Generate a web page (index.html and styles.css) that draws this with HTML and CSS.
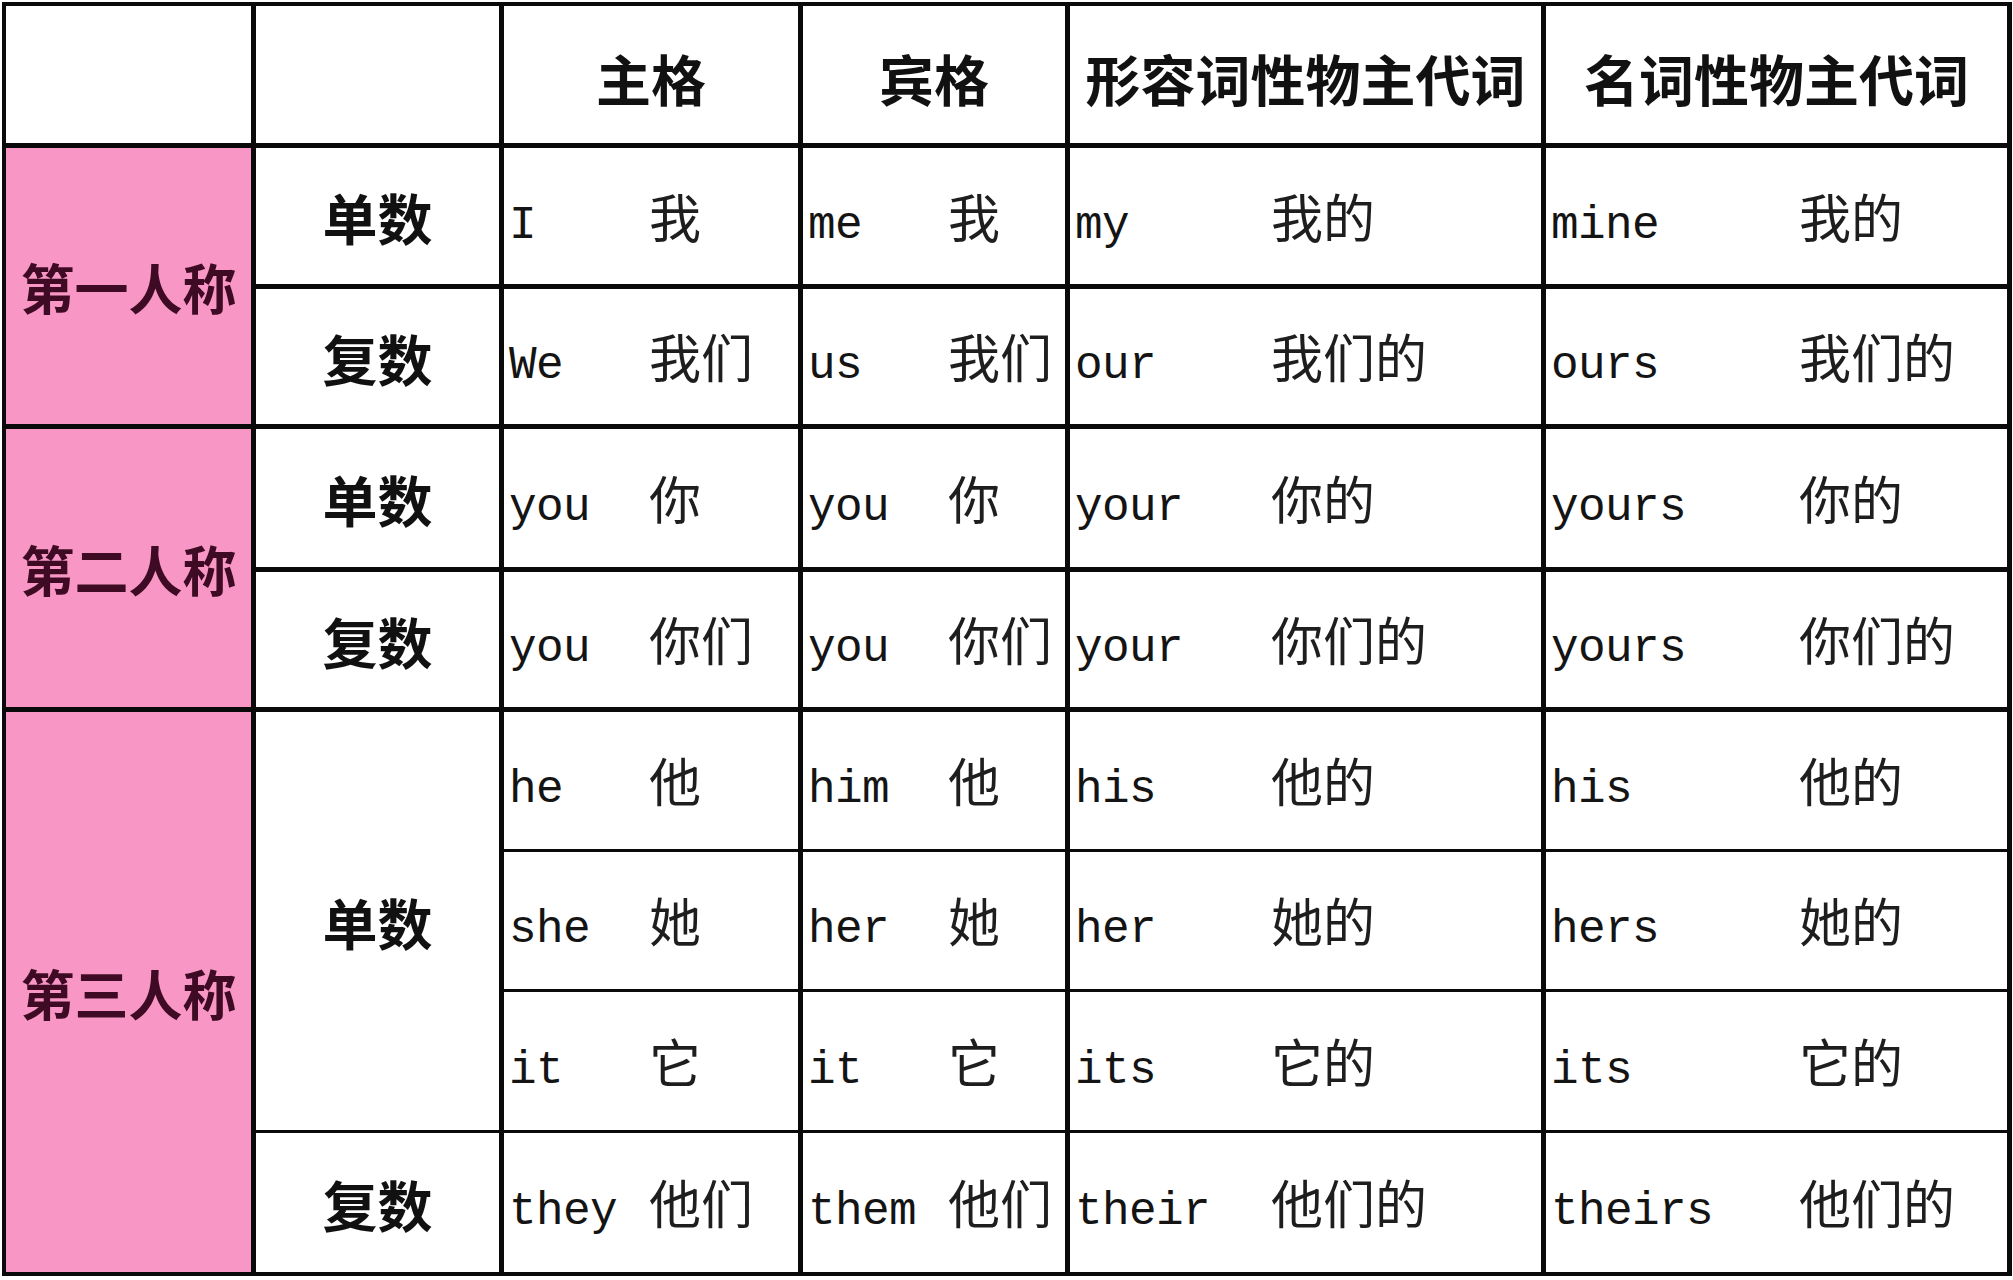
FILE: index.html
```html
<!DOCTYPE html>
<html lang="zh-CN">
<head>
<meta charset="utf-8">
<title>人称代词表</title>
<link rel="stylesheet" href="styles.css">
</head>
<body>
<div class="table">
  <div class="cell head"></div>
  <div class="cell head"></div>
  <div class="cell head">主格</div>
  <div class="cell head">宾格</div>
  <div class="cell head">形容词性物主代词</div>
  <div class="cell head">名词性物主代词</div>

  <div class="cell person span2">第一人称</div>
  <div class="cell label">单数</div>
  <div class="cell d c3"><div class="line"><span class="en">I</span><span class="zh">我</span></div></div>
  <div class="cell d c4"><div class="line"><span class="en">me</span><span class="zh">我</span></div></div>
  <div class="cell d c5"><div class="line"><span class="en">my</span><span class="zh">我的</span></div></div>
  <div class="cell d c6"><div class="line"><span class="en">mine</span><span class="zh">我的</span></div></div>

  <div class="cell label">复数</div>
  <div class="cell d c3"><div class="line"><span class="en">We</span><span class="zh">我们</span></div></div>
  <div class="cell d c4"><div class="line"><span class="en">us</span><span class="zh">我们</span></div></div>
  <div class="cell d c5"><div class="line"><span class="en">our</span><span class="zh">我们的</span></div></div>
  <div class="cell d c6"><div class="line"><span class="en">ours</span><span class="zh">我们的</span></div></div>

  <div class="cell person span2">第二人称</div>
  <div class="cell label">单数</div>
  <div class="cell d c3"><div class="line"><span class="en">you</span><span class="zh">你</span></div></div>
  <div class="cell d c4"><div class="line"><span class="en">you</span><span class="zh">你</span></div></div>
  <div class="cell d c5"><div class="line"><span class="en">your</span><span class="zh">你的</span></div></div>
  <div class="cell d c6"><div class="line"><span class="en">yours</span><span class="zh">你的</span></div></div>

  <div class="cell label">复数</div>
  <div class="cell d c3"><div class="line"><span class="en">you</span><span class="zh">你们</span></div></div>
  <div class="cell d c4"><div class="line"><span class="en">you</span><span class="zh">你们</span></div></div>
  <div class="cell d c5"><div class="line"><span class="en">your</span><span class="zh">你们的</span></div></div>
  <div class="cell d c6"><div class="line"><span class="en">yours</span><span class="zh">你们的</span></div></div>

  <div class="cell person span4 last">第三人称</div>
  <div class="cell label span3 thin">单数</div>
  <div class="cell d c3 thin"><div class="line"><span class="en">he</span><span class="zh">他</span></div></div>
  <div class="cell d c4 thin"><div class="line"><span class="en">him</span><span class="zh">他</span></div></div>
  <div class="cell d c5 thin"><div class="line"><span class="en">his</span><span class="zh">他的</span></div></div>
  <div class="cell d c6 thin"><div class="line"><span class="en">his</span><span class="zh">他的</span></div></div>

  <div class="cell d c3 thin"><div class="line"><span class="en">she</span><span class="zh">她</span></div></div>
  <div class="cell d c4 thin"><div class="line"><span class="en">her</span><span class="zh">她</span></div></div>
  <div class="cell d c5 thin"><div class="line"><span class="en">her</span><span class="zh">她的</span></div></div>
  <div class="cell d c6 thin"><div class="line"><span class="en">hers</span><span class="zh">她的</span></div></div>

  <div class="cell d c3 thin"><div class="line"><span class="en">it</span><span class="zh">它</span></div></div>
  <div class="cell d c4 thin"><div class="line"><span class="en">it</span><span class="zh">它</span></div></div>
  <div class="cell d c5 thin"><div class="line"><span class="en">its</span><span class="zh">它的</span></div></div>
  <div class="cell d c6 thin"><div class="line"><span class="en">its</span><span class="zh">它的</span></div></div>

  <div class="cell label last">复数</div>
  <div class="cell d c3 last"><div class="line"><span class="en">they</span><span class="zh">他们</span></div></div>
  <div class="cell d c4 last"><div class="line"><span class="en">them</span><span class="zh">他们</span></div></div>
  <div class="cell d c5 last"><div class="line"><span class="en">their</span><span class="zh">他们的</span></div></div>
  <div class="cell d c6 last"><div class="line"><span class="en">theirs</span><span class="zh">他们的</span></div></div>
</div>
</body>
</html>
```

FILE: styles.css
```css
html, body {
  margin: 0;
  padding: 0;
  background: #ffffff;
}

body {
  font-family: "Noto Sans CJK SC", "Noto Sans", sans-serif;
  color: #151515;
}

.table {
  margin: 2px 0 0 2px;
  width: 2010px;
  box-sizing: border-box;
  border-left: 4px solid #0a0a0a;
  border-top: 4px solid #0a0a0a;
  display: grid;
  grid-template-columns: 250px 248px 299px 267px 476px 466px;
  grid-template-rows: 142px 141px 140px 143px 140px 140px 140px 141px 143px;
}

.cell {
  box-sizing: border-box;
  border-right: 5px solid #0a0a0a;
  border-bottom: 5px solid #0a0a0a;
  background: #ffffff;
  min-width: 0;
}

.cell.thin {
  border-bottom-width: 3px;
}

.cell.last {
  border-bottom-width: 4px;
}

.head {
  display: flex;
  align-items: center;
  justify-content: center;
  font-weight: 700;
  font-size: 55px;
  color: #111111;
  padding-top: 4px;
  white-space: nowrap;
}

.label {
  display: flex;
  align-items: center;
  justify-content: center;
  font-weight: 700;
  font-size: 55px;
  color: #111111;
}

.person {
  display: flex;
  align-items: center;
  justify-content: center;
  background: #f897c6;
  font-weight: 700;
  font-size: 54px;
  color: #3f0a24;
  white-space: nowrap;
}

.span2 {
  grid-row: span 2;
}

.span3 {
  grid-row: span 3;
}

.span4 {
  grid-row: span 4;
}

.d {
  display: flex;
  align-items: center;
  padding-left: 5px;
  padding-bottom: 2px;
}

.line {
  display: flex;
  align-items: baseline;
  white-space: nowrap;
}

.en {
  font-family: "Liberation Mono", "DejaVu Sans Mono", monospace;
  font-size: 46px;
  letter-spacing: -0.6px;
  color: #141414;
  flex: none;
}

.zh {
  font-family: "Noto Sans CJK SC", sans-serif;
  font-size: 52px;
  font-weight: 400;
  color: #1e1e1e;
  flex: none;
}

.c3 .en,
.c4 .en {
  width: 140px;
}

.c5 .en {
  width: 196px;
}

.c6 .en {
  width: 248px;
}
```
